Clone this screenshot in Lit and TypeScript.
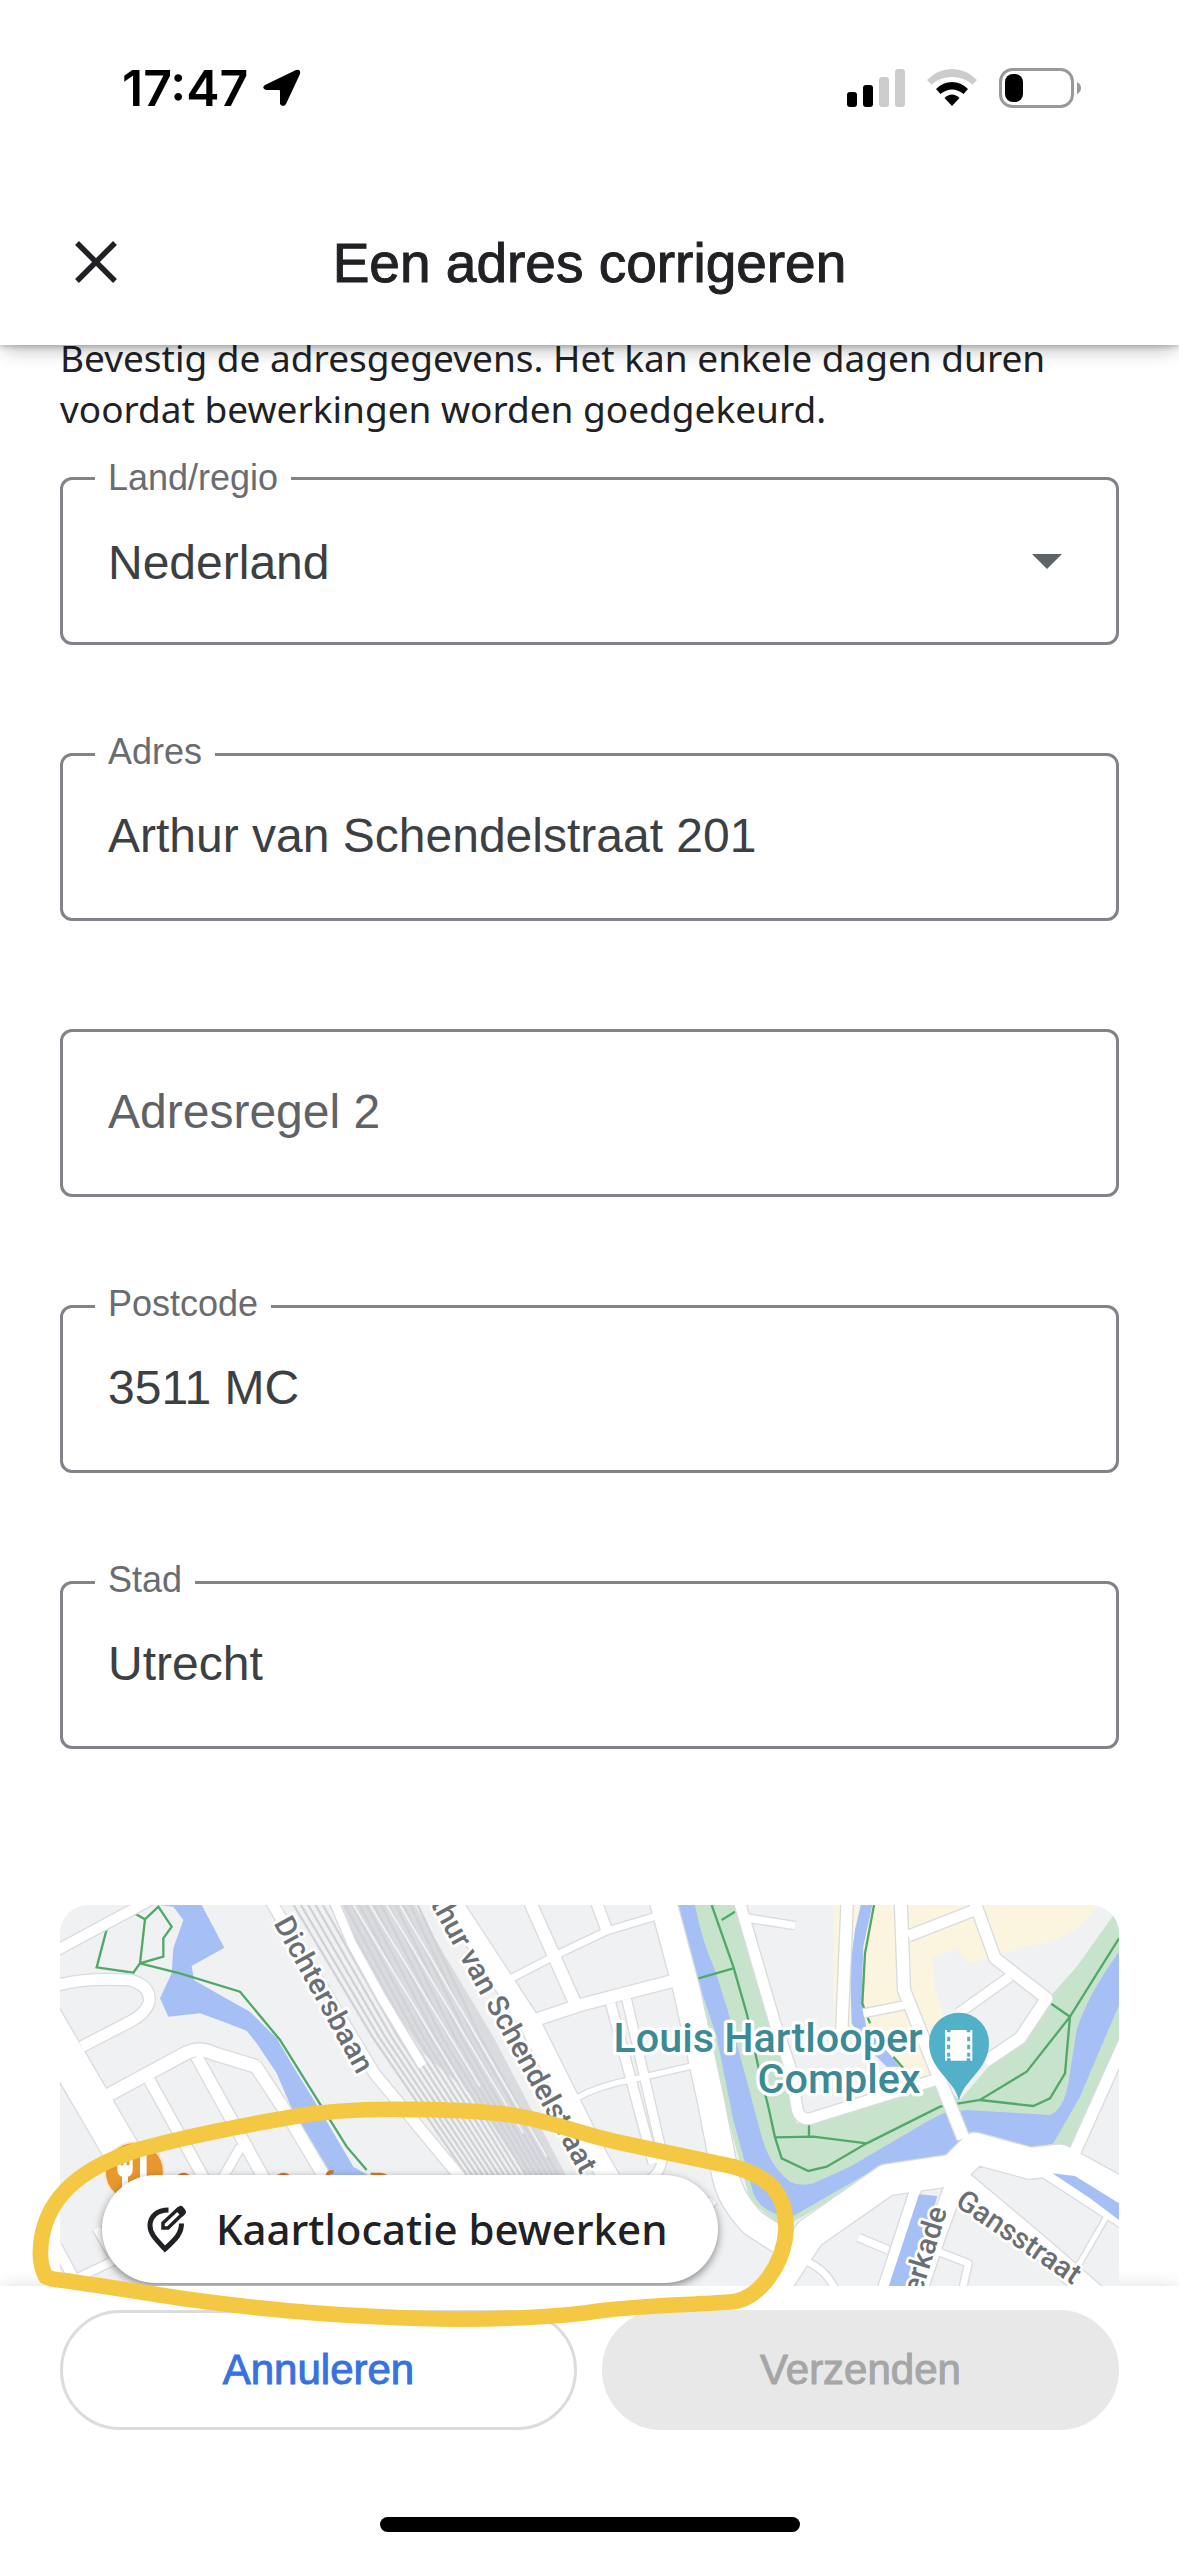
import { LitElement, html, svg, css } from "lit";
import { customElement, property } from "lit/decorators.js";

type Road = [width: number, d: string];

// The map is drawn in units of a third of a pixel.
const MAP_VIEW = "180 75 3177 1143";

const ROADS: Road[] = [
  [30, "M150 222 L460 55"],
  [32, "M165 318 Q250 292 390 300 Q455 318 447 368 Q435 402 390 425 L245 500"],
  [108, "M130 412 L430 925"],
  [38, "M325 645 L560 518 Q600 500 640 520 L770 560"],
  [36, "M765 555 L860 700 L985 910"],
  [34, "M590 530 L800 910"],
  [32, "M448 600 L620 910"],
  [26, "M722 800 L665 900"],
  [30, "M170 1100 L245 1240"],
  [24, "M220 1200 L345 1140 L290 1045"],
  [32, "M810 60 L1123 580 L1400 915"],
  [26, "M1000 60 L1055 190 L1143 350 L1268 558"],
  [62, "M1345 55 L1590 430 L1790 830 L1830 900"],
  [36, "M1585 55 L1732 385"],
  [32, "M1785 55 L1820 150"],
  [20, "M1515 305 L1680 220 L1820 153 L1970 108"],
  [36, "M1590 425 L1740 375 L2030 300"],
  [28, "M1832 370 L1960 850"],
  [26, "M1880 358 L1986 820 Q1992 880 1930 910"],
  [16, "M1728 655 Q1800 615 1900 598 L2110 550"],
  [78, "M1985 50 L2060 330 L2130 650 L2175 880 Q2190 960 2260 1030 L2400 1120"],
  [26, "M2140 960 L2100 1010"],
  [32, "M2215 55 L2325 430 L2370 560 L2392 690 Q2405 730 2450 710 L2820 595"],
  [22, "M2230 112 L2385 137"],
  [34, "M2542 55 L2525 460"],
  [36, "M2702 55 L2712 330 L2890 775"],
  [32, "M2725 168 L2930 88"],
  [34, "M2920 55 L2985 235 L3140 355 L3060 475 L2955 545"],
  [28, "M3030 290 L2875 400"],
  [24, "M2590 400 L2722 374"],
  [34, "M3380 470 L3225 815"],
  [92, "M2310 1240 L2430 1060 L2660 900 L2860 870 L2925 805 L3090 850 L3180 840 L3380 950"],
  [34, "M3110 860 L3380 1035"],
  [32, "M2750 920 L2645 1240"],
  [56, "M2870 900 L2810 1060 L2750 1240"],
  [64, "M2880 900 L3130 1110 L3290 1250"],
  [14, "M3320 1010 L3210 1200"],
  [22, "M2575 1072 L2665 1110"],
  [20, "M2395 1135 Q2480 1160 2510 1240"],
  [20, "M2815 1115 L2905 1150 L2885 1240"],
];

const rails = Array.from({ length: 18 }, (_, i) => {
  const top = 872 + i * 22;
  const bottom = 1410 + i * 16;
  return `M${top} 60 L${Math.round((top + bottom) / 2) - 24} 470 L${bottom} 900`;
});

@customElement("street-map")
class StreetMap extends LitElement {
  static styles = css`
    :host { display: block; height: 100%; }
    .map { display: block; width: 100%; height: 100%; }
    .street { font: 500 88px Roboto, sans-serif; fill: #6b6f74; stroke: #fff; stroke-width: 16px; paint-order: stroke; stroke-linejoin: round; }
    .place { font: 500 124px Roboto, sans-serif; fill: #3b8a95; stroke: #fff; stroke-width: 20px; paint-order: stroke; stroke-linejoin: round; }
  `;

  render() {
    return html`
      <svg class="map" viewBox=${MAP_VIEW} preserveAspectRatio="xMidYMin slice" role="img" aria-label="Kaart">
        <rect x="0" y="0" width="3600" height="1400" fill="#f0f1f3" />
        <path fill="#fbf5e0" d="M2500 75 H3295 L3240 140 L3170 180 L3060 205 L2905 250 L2870 205 L2797 235 L2805 330 L2835 420 L2790 440 L2800 590 L2700 590 L2590 470 L2500 430Z" />
        <path fill="#c8e3cc" d="M2020 60 H2200 L2335 440 L2370 640 L2390 730 L2450 725 L2820 610 L2880 660 L2970 555 L3060 490 L3150 350 L3230 260 L3337 110 L3380 70 V500 L3230 810 H3150 L2800 900 L2600 900 L2380 1025 L2330 1030 L2250 960 L2180 700 L2090 350Z" />
        <g fill="#a6c0f5">
          <path d="M480 75 H605 L673 203 L575 258 L582 300 L660 345 L750 395 L830 475 L880 560 L960 690 L1060 860 L1130 900 H990 L890 720 L830 580 L770 490 L740 452 L670 425 L600 400 L505 410 L480 355 L515 280 L520 205 L550 120 L520 80Z" />
          <path d="M2035 75 H2085 Q2105 180 2145 270 L2180 380 L2240 600 L2285 770 Q2310 860 2370 905 Q2400 920 2440 910 L2550 860 L2780 725 L2830 700 L2900 690 L3150 705 Q3190 690 3205 610 L3230 450 Q3260 350 3357 215 V375 L3240 650 L3160 790 L3080 812 L2880 800 L2820 860 L2700 845 L2620 870 L2380 1008 Q2290 1010 2260 940 L2200 720 L2150 470 L2090 290Z" />
          <path d="M2582 75 H2617 L2590 200 L2585 350 L2600 450 L2650 500 L2700 560 H2660 L2600 500 L2555 430 L2550 260 L2565 150Z" />
        </g>
        <g fill="none" stroke="#52a869" stroke-width="7">
          <path d="M320 148 L290 262 L400 278 L420 250 L490 230 V175 L515 140 L475 80 L435 118 L400 98 M435 118 L420 250 L540 280 L720 335 L840 480 L965 680 L1040 800 L1100 870" />
          <path d="M2135 75 L2200 260 L2240 400 L2275 560 L2305 680 L2325 772 L2345 835 L2425 873 L2480 860 L2600 790 L2820 680 L2940 660 L3080 575 L3210 410 L3357 175 M3210 410 L3145 365 M3210 410 L3195 580 L3150 655 L3100 678 L2940 660 M2165 120 L2205 95 M2065 245 L2085 298 L2200 265 M2325 772 L2440 770 L2600 790 M2427 735 V770" />
          <path d="M2622 75 L2595 220 L2587 370 L2610 430 M2680 530 L2710 565" />
        </g>
        <path fill="#d9dbdf" d="M1020 60 H1235 L1480 470 L1700 890 H1580 L1420 650 L1270 520 L1090 240Z" />
        <g fill="none" stroke="#d0d2d6" stroke-width="7">${rails.map((d) => svg`<path d=${d} />`)}</g>
        <g fill="none" stroke="#f0f1f3" stroke-width="6">
          <path d="M1060 75 L1400 640 M1110 75 L1440 620 M1160 75 L1570 760 M1200 75 L1640 830" />
        </g>
        <g fill="none" stroke="#d9dbdf" stroke-linejoin="round">
          ${ROADS.map(([w, d]) => svg`<path d=${d} stroke-width=${w + 8} />`)}
        </g>
        <g fill="none" stroke="#ffffff" stroke-linejoin="round">
          ${ROADS.map(([w, d]) => svg`<path d=${d} stroke-width=${w} />`)}
        </g>
        <path fill="#a6c0f5" d="M3157 880 L3225 888 L3357 970 V1020 L3270 955Z" />
        <path fill="#a6c0f5" d="M2757 943 L2812 948 L2732 1225 H2664Z" />
        <text class="street" transform="translate(820 130) rotate(61)">Dichtersbaan</text>
        <text class="street" text-anchor="end" transform="translate(1742 886) rotate(61)">Arthur van Schendelstraat</text>
        <text class="street" transform="translate(2862 975) rotate(34)">Gansstraat</text>
        <text class="street" text-anchor="end" transform="translate(2842 990) rotate(-73)">erkade</text>
        <text class="place" text-anchor="end" x="2768" y="517">Louis Hartlooper</text>
        <text class="place" text-anchor="end" x="2762" y="640">Complex</text>
        <path fill="#52b1c8" d="M2877 662 C2865 600 2787 570 2787 488 A90 90 0 0 1 2967 488 C2967 570 2889 600 2877 662Z" />
        <path fill="#fff" d="M2835 450 H2841 V457 H2852 V450 H2900 V457 H2911 V450 H2917 V542 H2911 V535 H2900 V542 H2852 V535 H2841 V542 H2835Z" />
        <path stroke="#52b1c8" stroke-width="9" stroke-dasharray="14 10" d="M2846 470 V530 M2906 470 V530" />
        <circle cx="403" cy="875" r="88" fill="#e8962e" stroke="#fbe3c4" stroke-width="5" />
        <path fill="#fff" d="M352 830 h10 v26 h8 v-26 h10 v26 h8 v-26 h10 v40 q0 16 -14 20 v50 h-18 v-50 q-14 -4 -14 -20Z M420 920 v-85 q4 -24 20 -26 v111Z" />
        <g fill="none" stroke="#d9762b" stroke-width="12">
          <path d="M530 897 Q550 872 572 897 M828 897 Q850 872 874 897 M980 900 Q982 870 1000 878 M1112 884 H1142 Q1160 886 1166 900" />
        </g>
      </svg>
    `;
  }
}

@customElement("outlined-field")
class OutlinedField extends LitElement {
  @property() label = "";
  @property() value = "";
  @property() kind: "text" | "select" = "text";
  @property({ type: Boolean }) empty = false;

  static styles = css`
    :host { display: block; }
    .field { position: relative; display: flex; align-items: center; border: 3px solid #818388; border-radius: 12px; }
    .label { position: absolute; left: 32px; top: -24px; padding: 0 13px; background: #fff; color: #696c70; font: 36px/40px "Liberation Sans", sans-serif; }
    .select + .arrow + .label { top: -22px; }
    .label.hidden { clip-path: inset(50%); }
    .control { flex: 1; min-width: 0; box-sizing: border-box; height: 162px; margin: 0; padding: 0 45px 4px; border: 0; border-radius: 9px; background: none; color: #3c4043; font: 48px/56px "Liberation Sans", sans-serif; appearance: none; outline: none; }
    .select { padding: 4px 45px 0; }
    .control::placeholder { color: #5f6368; opacity: 1; }
    .arrow { position: absolute; right: 54px; width: 30px; height: 15px; pointer-events: none; }
  `;

  render() {
    const select = this.kind === "select";
    return html`
      <div class="field">
        ${select
          ? html`<select id="control" class="control select"><option>${this.value}</option></select>
              <svg class="arrow" viewBox="0 0 30 15" aria-hidden="true"><path fill="#5f6368" d="M0 0 H30 L15 15Z" /></svg>`
          : html`<input id="control" class="control" type="text" .value=${this.value} placeholder=${this.empty ? this.label : ""} />`}
        <label for="control" class=${this.empty ? "label hidden" : "label"}>${this.label}</label>
      </div>
    `;
  }
}

@customElement("app-root")
class AppRoot extends LitElement {
  static styles = css`
    :host { display: block; font-family: "Liberation Sans", Arial, sans-serif; color: #202124; }
    .page { display: flex; flex-direction: column; min-height: 100vh; background: #fff; }
    .header { position: relative; z-index: 3; background: #fff; box-shadow: 0 8px 18px -4px rgba(0, 0, 0, 0.28), 0 2px 5px rgba(0, 0, 0, 0.2); }
    .status { display: flex; align-items: center; justify-content: space-between; height: 176px; padding: 0 97px 0 122px; color: #000; }
    .clock { display: flex; align-items: center; gap: 14px; font: 600 50px/60px Inter, sans-serif; }
    .signals { display: flex; align-items: center; gap: 22px; }
    .icon { display: block; }
    .bar { display: grid; grid-template-columns: 1fr auto 1fr; align-items: center; height: 165px; padding: 4px 60px 0; }
    .close { justify-self: start; display: block; padding: 12px; border: 0; background: none; }
    .title { margin: 0; font-size: 55px; line-height: 64px; font-weight: 400; -webkit-text-stroke: 1px #202124; }
    .content { flex: 1; display: flex; flex-direction: column; padding: 0 60px; }
    .intro { margin: -13px 0 43px; font: 37px/51px "Noto Sans", sans-serif; }
    .fields { display: grid; gap: 108px; margin-bottom: 156px; }
    .location { position: relative; z-index: 2; flex: 1 1 381px; display: flex; min-height: 381px; }
    .canvas { position: absolute; inset: 0; overflow: hidden; border-radius: 28px 28px 0 0; }
    .edit { position: absolute; left: 42px; bottom: 3px; display: flex; align-items: center; gap: 27px; height: 108px; padding: 0 50px 0 45px; border: 0; border-radius: 54px; background: #fff; color: #202124; font: 500 42px/52px "Noto Sans", sans-serif; box-shadow: 0 3px 8px rgba(0, 0, 0, 0.45); white-space: nowrap; }
    .scribble { position: absolute; inset: 0; width: 100%; height: 100%; overflow: visible; pointer-events: none; }
    .footer { position: relative; z-index: 1; padding: 24px 60px; background: #fff; box-shadow: 0 0 18px -2px rgba(0, 0, 0, 0.16); }
    .actions { display: grid; grid-template-columns: 1fr 1fr; gap: 25px; margin-bottom: 87px; }
    .action { box-sizing: border-box; height: 120px; border: 3px solid #dadce0; border-radius: 60px; background: #fff; color: #3871e0; font: 42px/50px "Liberation Sans", sans-serif; -webkit-text-stroke: 1px currentColor; }
    .action:disabled { border-color: #e8e8e8; background: #e8e8e8; color: #a6a6a7; }
    .home { width: 420px; height: 15px; margin: 0 auto; border-radius: 8px; background: #000; }
  `;

  render() {
    return html`
      <div class="page">
        <header class="header">
          <div class="status">
            <div class="clock">
              <span>17:47</span>
              <svg class="icon" width="40" height="40" viewBox="0 0 40 40" aria-hidden="true">
                <path d="M3 17 L34 2 Q39 1 38 6 L24 36 Q21 40 18 36 V23 Q18 22 17 22 H4 Q-1 20 3 17Z" />
              </svg>
            </div>
            <div class="signals">
              <svg class="icon" width="58" height="38" viewBox="0 0 58 38" aria-hidden="true">
                <rect x="0" y="23" width="10" height="15" rx="3" />
                <rect x="16" y="16" width="10" height="22" rx="3" />
                <rect x="32" y="8" width="10" height="30" rx="3" fill="#ccc" />
                <rect x="48" y="0" width="10" height="38" rx="3" fill="#ccc" />
              </svg>
              <svg class="icon" width="50" height="38" viewBox="0 0 50 38" aria-hidden="true">
                <path fill="#ccc" d="M0 11 Q11 0 25 0 Q39 0 50 11 L45.500 15.500 Q37 8 25 8 Q13 8 4.500 15.500Z" />
                <path d="M9 20 Q16 13 25 13 Q34 13 41 20 L36.500 25 Q31 20.500 25 20.500 Q19 20.500 13.500 25Z" />
                <path d="M17.500 29 Q21 25.500 25 25.500 Q29 25.500 32.500 29 L25 37Z" />
              </svg>
              <svg class="icon" width="83" height="40" viewBox="0 0 83 40" aria-hidden="true">
                <rect x="1.500" y="1.500" width="72" height="37" rx="12" fill="none" stroke="#999" stroke-width="3" />
                <rect x="6" y="6" width="18" height="28" rx="8" />
                <path fill="#999" d="M78 14 Q82 16 82 20 Q82 24 78 26Z" />
              </svg>
            </div>
          </div>
          <div class="bar">
            <button class="close" aria-label="Sluiten">
              <svg class="icon" width="48" height="48" viewBox="0 0 48 48" aria-hidden="true">
                <path d="M5 4 L43 42 M43 4 L5 42" fill="none" stroke="#202124" stroke-width="5.500" />
              </svg>
            </button>
            <h1 class="title">Een adres corrigeren</h1>
          </div>
        </header>
        <main class="content">
          <p class="intro">Bevestig de adresgegevens. Het kan enkele dagen duren voordat bewerkingen worden goedgekeurd.</p>
          <div class="fields">
            <outlined-field kind="select" label="Land/regio" value="Nederland"></outlined-field>
            <outlined-field label="Adres" value="Arthur van Schendelstraat 201"></outlined-field>
            <outlined-field label="Adresregel 2" empty></outlined-field>
            <outlined-field label="Postcode" value="3511 MC"></outlined-field>
            <outlined-field label="Stad" value="Utrecht"></outlined-field>
          </div>
          <section class="location">
            <div class="canvas">
              <street-map></street-map>
              <button class="edit">
                <svg class="icon" width="42" height="48" viewBox="0 0 42 48" aria-hidden="true">
                  <path fill="none" stroke="#202124" stroke-width="5" d="M21.500 5 C10 5 3 11.500 3 20.500 C3 29 9 34.500 18 44 C28 34.500 34.500 29 34.500 18.500" />
                  <path fill="none" stroke="#202124" stroke-width="3.500" d="M16 23 V18 L31 4 L36 8.500 L21 23Z" />
                  <path fill="#202124" d="M28 5 L32 1.500 Q34 0 36 2 L38 4.500 Q40 7 38 9 L35 12Z" />
                </svg>
                <span>Kaartlocatie bewerken</span>
              </button>
            </div>
            <svg class="scribble" viewBox=${MAP_VIEW} preserveAspectRatio="xMidYMin slice" aria-hidden="true">
              <path fill="none" stroke="#f5c843" stroke-width="47" stroke-linecap="round" stroke-linejoin="round"
                d="M157 1197 L137 1190 Q122 1160 121 1120 C124 950 250 860 420 808 C560 768 720 738 880 710 Q1020 686 1200 688 Q1400 688 1530 704 C1660 722 1740 765 1880 792 L2200 860 C2310 890 2360 940 2358 1050 C2352 1150 2280 1260 2190 1266 C2050 1276 1900 1276 1760 1298 C1560 1320 1350 1322 1128 1310 C900 1300 740 1282 564 1258 C420 1236 260 1210 157 1197" />
            </svg>
          </section>
        </main>
        <footer class="footer">
          <div class="actions">
            <button class="action">Annuleren</button>
            <button class="action" disabled>Verzenden</button>
          </div>
          <div class="home"></div>
        </footer>
      </div>
    `;
  }
}
